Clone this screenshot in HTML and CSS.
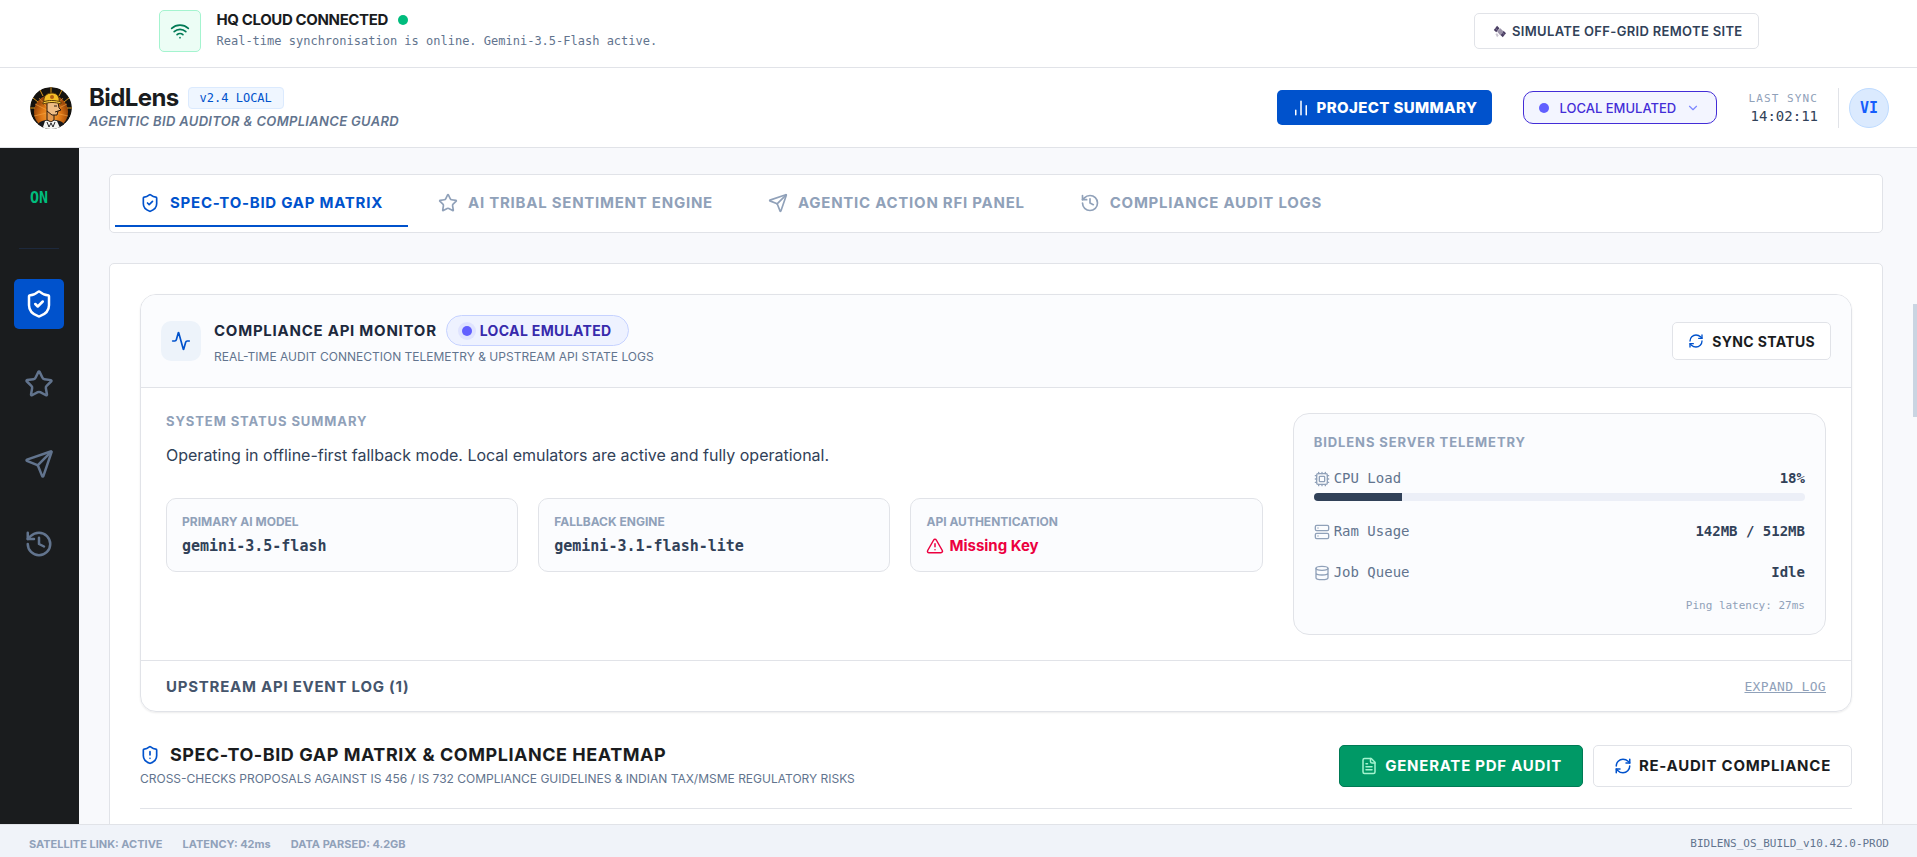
FILE: index.html
```html
<!DOCTYPE html>
<html lang="en">
  <head>
    <meta charset="utf-8">
    <meta name="viewport" content="width=device-width, initial-scale=1">
    <title>BidLens</title>
    <link rel="stylesheet" href="styles.css">
  </head>
  <body>
    <!-- icons shared by the sidebar, tabs and buttons -->
    <svg class="sprite" aria-hidden="true">
      <symbol id="shield-check" viewBox="0 0 24 24">
        <path d="M20 13c0 5-3.5 7.5-7.66 8.95a1 1 0 0 1-.67-.01C7.5 20.5 4 18 4 13V6a1 1 0 0 1 1-1c2 0 4.5-1.2 6.24-2.72a1.17 1.17 0 0 1 1.52 0C14.51 3.81 17 5 19 5a1 1 0 0 1 1 1z"/>
        <path d="m9 12 2 2 4-4"/>
      </symbol>
      <symbol id="shield-alert" viewBox="0 0 24 24">
        <path d="M20 13c0 5-3.5 7.5-7.66 8.95a1 1 0 0 1-.67-.01C7.5 20.5 4 18 4 13V6a1 1 0 0 1 1-1c2 0 4.5-1.2 6.24-2.72a1.17 1.17 0 0 1 1.52 0C14.51 3.81 17 5 19 5a1 1 0 0 1 1 1z"/>
        <path d="M12 8v4M12 16h.01"/>
      </symbol>
      <symbol id="star" viewBox="0 0 24 24">
        <path d="M11.525 2.295a.53.53 0 0 1 .95 0l2.31 4.679a2.123 2.123 0 0 0 1.595 1.16l5.166.756a.53.53 0 0 1 .294.904l-3.736 3.638a2.123 2.123 0 0 0-.611 1.878l.882 5.14a.53.53 0 0 1-.771.56l-4.618-2.428a2.122 2.122 0 0 0-1.973 0L6.396 21.01a.53.53 0 0 1-.77-.56l.881-5.139a2.122 2.122 0 0 0-.611-1.879L2.16 9.795a.53.53 0 0 1 .294-.906l5.165-.755a2.122 2.122 0 0 0 1.597-1.16z"/>
      </symbol>
      <symbol id="send" viewBox="0 0 24 24">
        <path d="M14.536 21.686a.5.5 0 0 0 .937-.024l6.5-19a.496.496 0 0 0-.635-.635l-19 6.5a.5.5 0 0 0-.024.937l7.93 3.18a2 2 0 0 1 1.112 1.11z"/>
        <path d="m21.854 2.147-10.94 10.939"/>
      </symbol>
      <symbol id="history" viewBox="0 0 24 24">
        <path d="M3 12a9 9 0 1 0 9-9 9.75 9.75 0 0 0-6.74 2.74L3 8"/>
        <path d="M3 3v5h5M12 7v5l4 2"/>
      </symbol>
      <symbol id="refresh" viewBox="0 0 24 24">
        <path d="M3 12a9 9 0 0 1 9-9 9.75 9.75 0 0 1 6.74 2.74L21 8"/>
        <path d="M21 3v5h-5"/>
        <path d="M21 12a9 9 0 0 1-9 9 9.75 9.75 0 0 1-6.74-2.74L3 16"/>
        <path d="M8 16H3v5"/>
      </symbol>
    </svg>

    <div class="network-bar">
      <div class="network-inner">
        <div class="network-status">
          <div class="network-icon">
            <svg class="icon icon-20" viewBox="0 0 24 24"><path d="M12 20h.01M2 8.82a15 15 0 0 1 20 0M5 12.859a10 10 0 0 1 14 0M8.5 16.429a5 5 0 0 1 7 0"/></svg>
          </div>
          <div>
            <div class="network-title">HQ CLOUD CONNECTED <span class="dot green"></span></div>
            <div class="network-text">Real-time synchronisation is online. Gemini-3.5-Flash active.</div>
          </div>
        </div>
        <button class="btn btn-small" type="button">
          <svg class="satellite" viewBox="0 0 16 16">
            <path fill="#4b3f63" d="M1 6l4-5 3 3-4 5zM9 12l4-5 3 3-4 5z"/>
            <path fill="#9b93a8" d="M5 8l4-4 4 4-4 5z"/>
            <path fill="#c9c4d0" d="M3 11l2-1 2 3-2 2z"/>
            <path stroke="#8a7fa3" stroke-width="1" d="M3 4l3 3M11 9l3 3"/>
          </svg>
          SIMULATE OFF-GRID REMOTE SITE
        </button>
      </div>
    </div>

    <header class="header">
      <div class="brand">
        <svg class="logo" viewBox="0 0 44 44">
          <defs>
            <radialGradient id="glow" cx="50%" cy="60%" r="50%">
              <stop offset="0" stop-color="#fba63a"/>
              <stop offset="0.6" stop-color="#dd7615"/>
              <stop offset="1" stop-color="#a04c0c"/>
            </radialGradient>
            <clipPath id="round"><circle cx="22" cy="22" r="21"/></clipPath>
          </defs>
          <g clip-path="url(#round)">
            <circle cx="22" cy="22" r="21" fill="#15130f"/>
            <circle cx="22" cy="26" r="17" fill="url(#glow)"/>
            <path d="M22 1v6M11 4l3 6M33 4l-3 6M4 12l5 4M40 12l-5 4M1 22h5M43 22h-5" stroke="#d8961f" stroke-width="1"/>
            <path d="M22 26L6 18M22 26L5 30M22 26L38 18M22 26L39 30M22 26L10 12M22 26L34 12" stroke="#f6a846" stroke-width="1" opacity=".6"/>
            <path d="M7 44c0-6 4-9 10-10h10c6 1 10 4 10 10z" fill="#17181b"/>
            <path d="M13 44l3-9 6-1 6 1 4 9z" fill="#f5f5f2"/>
            <path d="M18 25h7v9l-3 2-4-2z" fill="#e49b51" stroke="#2a1b10" stroke-width="1"/>
            <path d="M18 16h11l1 6 2 2-3 1-1 4h-5l-5-4z" fill="#efbd85" stroke="#2a1b10" stroke-width="1"/>
            <path d="M25 20h3M26 26l3-1" stroke="#2a1b10" stroke-width="1"/>
            <path d="M18 36l2 5 2-4 2 4 2-5" fill="none" stroke="#202124" stroke-width="1"/>
            <path d="M15 16c-1-6 3-9 8-9s8 4 7 9z" fill="#f5bf27" stroke="#5b3b08" stroke-width="1"/>
            <path d="M14 16c5-2 12-2 18 0v2c-6-2-12-2-18 0z" fill="#ffd447" stroke="#5b3b08" stroke-width="1"/>
            <circle cx="23" cy="11" r="2" fill="#b05e12"/>
          </g>
        </svg>
        <div>
          <div class="brand-row">
            <h1>BidLens</h1>
            <span class="version">v2.4 LOCAL</span>
          </div>
          <p class="tagline">AGENTIC BID AUDITOR &amp; COMPLIANCE GUARD</p>
        </div>
      </div>
      <div class="header-actions">
        <button class="btn-summary" type="button">
          <svg class="icon icon-18" viewBox="0 0 24 24"><path d="M5 21v-6M12 21V3M19 21V9"/></svg>
          PROJECT SUMMARY
        </button>
        <label class="mode">
          <span class="dot indigo"></span>
          <select aria-label="Mode">
            <option>LOCAL EMULATED</option>
          </select>
          <svg class="icon icon-14" viewBox="0 0 24 24"><path d="m6 9 6 6 6-6"/></svg>
        </label>
        <div class="sync">
          <div class="sync-label">LAST SYNC</div>
          <div class="sync-time">14:02:11</div>
        </div>
        <div class="user">
          <div class="avatar">VI</div>
        </div>
      </div>
    </header>

    <div class="layout">
      <nav class="sidebar">
        <div class="on">ON</div>
        <button class="side-btn active" type="button" aria-label="Gap matrix"><svg class="icon icon-30"><use href="#shield-check"/></svg></button>
        <button class="side-btn" type="button" aria-label="Sentiment engine"><svg class="icon icon-30"><use href="#star"/></svg></button>
        <button class="side-btn" type="button" aria-label="RFI panel"><svg class="icon icon-30"><use href="#send"/></svg></button>
        <button class="side-btn" type="button" aria-label="Audit logs"><svg class="icon icon-30"><use href="#history"/></svg></button>
      </nav>

      <main class="main">
        <div class="tabs">
          <button class="tab active" type="button"><svg class="icon icon-20"><use href="#shield-check"/></svg>SPEC-TO-BID GAP MATRIX</button>
          <button class="tab" type="button"><svg class="icon icon-20"><use href="#star"/></svg>AI TRIBAL SENTIMENT ENGINE</button>
          <button class="tab" type="button"><svg class="icon icon-20"><use href="#send"/></svg>AGENTIC ACTION RFI PANEL</button>
          <button class="tab" type="button"><svg class="icon icon-20"><use href="#history"/></svg>COMPLIANCE AUDIT LOGS</button>
        </div>

        <div class="panel">
          <section class="monitor">
            <div class="monitor-head">
              <div class="monitor-icon">
                <svg class="icon icon-20" viewBox="0 0 24 24"><path d="M22 12h-2.48a2 2 0 0 0-1.93 1.46l-2.35 8.36a.25.25 0 0 1-.48 0L9.24 2.18a.25.25 0 0 0-.48 0l-2.35 8.36A2 2 0 0 1 4.49 12H2"/></svg>
              </div>
              <div>
                <div class="monitor-title">
                  <h2>COMPLIANCE API MONITOR</h2>
                  <span class="pill"><span class="dot indigo halo"></span>LOCAL EMULATED</span>
                </div>
                <p class="sub">REAL-TIME AUDIT CONNECTION TELEMETRY &amp; UPSTREAM API STATE LOGS</p>
              </div>
              <button class="btn btn-sync" type="button"><svg class="icon icon-16 blue"><use href="#refresh"/></svg>SYNC STATUS</button>
            </div>

            <div class="monitor-body">
              <div class="status">
                <h3>SYSTEM STATUS SUMMARY</h3>
                <p class="status-text">Operating in offline-first fallback mode. Local emulators are active and fully operational.</p>
                <div class="facts">
                  <div class="fact">
                    <div class="fact-label">PRIMARY AI MODEL</div>
                    <div class="fact-value">gemini-3.5-flash</div>
                  </div>
                  <div class="fact">
                    <div class="fact-label">FALLBACK ENGINE</div>
                    <div class="fact-value">gemini-3.1-flash-lite</div>
                  </div>
                  <div class="fact">
                    <div class="fact-label">API AUTHENTICATION</div>
                    <div class="fact-value missing">
                      <svg class="icon icon-18" viewBox="0 0 24 24"><path d="m21.73 18-8-14a2 2 0 0 0-3.48 0l-8 14A2 2 0 0 0 4 21h16a2 2 0 0 0 1.73-3M12 9v4M12 17h.01"/></svg>
                      Missing Key
                    </div>
                  </div>
                </div>
              </div>

              <div class="telemetry">
                <h3>BIDLENS SERVER TELEMETRY</h3>
                <div class="metric">
                  <svg class="icon icon-16" viewBox="0 0 24 24"><rect x="4" y="4" width="16" height="16" rx="2"/><rect x="8" y="8" width="8" height="8" rx="1"/><path d="M12 20v2M12 2v2M17 20v2M17 2v2M2 12h2M2 17h2M2 7h2M20 12h2M20 17h2M20 7h2M7 20v2M7 2v2"/></svg>
                  <span>CPU Load</span><b>18%</b>
                </div>
                <div class="bar"><div class="bar-fill" style="width: 18%"></div></div>
                <div class="metric">
                  <svg class="icon icon-16" viewBox="0 0 24 24"><rect x="2" y="2" width="20" height="8" rx="2"/><rect x="2" y="14" width="20" height="8" rx="2"/><path d="M6 6h.01M6 18h.01"/></svg>
                  <span>Ram Usage</span><b>142MB / 512MB</b>
                </div>
                <div class="metric">
                  <svg class="icon icon-16" viewBox="0 0 24 24"><ellipse cx="12" cy="5" rx="9" ry="3"/><path d="M3 5v14a9 3 0 0 0 18 0V5M3 12a9 3 0 0 0 18 0"/></svg>
                  <span>Job Queue</span><b>Idle</b>
                </div>
                <div class="ping">Ping latency: 27ms</div>
              </div>
            </div>

            <div class="monitor-log">
              <h2>UPSTREAM API EVENT LOG (1)</h2>
              <button class="expand" type="button">EXPAND LOG</button>
            </div>
          </section>

          <section class="matrix-head">
            <div>
              <h2 class="matrix-title"><svg class="icon icon-20 blue"><use href="#shield-alert"/></svg>SPEC-TO-BID GAP MATRIX &amp; COMPLIANCE HEATMAP</h2>
              <p class="sub">CROSS-CHECKS PROPOSALS AGAINST IS 456 / IS 732 COMPLIANCE GUIDELINES &amp; INDIAN TAX/MSME REGULATORY RISKS</p>
            </div>
            <div class="matrix-actions">
              <button class="btn btn-large btn-green" type="button">
                <svg class="icon icon-18" viewBox="0 0 24 24"><path d="M15 2H6a2 2 0 0 0-2 2v16a2 2 0 0 0 2 2h12a2 2 0 0 0 2-2V7Z"/><path d="M14 2v4a2 2 0 0 0 2 2h4M10 9H8M16 13H8M16 17H8"/></svg>
                GENERATE PDF AUDIT
              </button>
              <button class="btn btn-large" type="button"><svg class="icon icon-18 blue"><use href="#refresh"/></svg>RE-AUDIT COMPLIANCE</button>
            </div>
          </section>
        </div>
      </main>
      <div class="scroll-track"><div class="scroll-thumb"></div></div>
    </div>

    <footer class="footer">
      <span>SATELLITE LINK: ACTIVE</span>
      <span>LATENCY: 42ms</span>
      <span>DATA PARSED: 4.2GB</span>
      <span class="build">BIDLENS_OS_BUILD_v10.42.0-PROD</span>
    </footer>
  </body>
</html>
```

FILE: styles.css
```css
* {
  box-sizing: border-box;
}

body {
  margin: 0;
  height: 100vh;
  display: flex;
  flex-direction: column;
  overflow: hidden;
  background: #f8f9fc;
  color: #1a1c1e;
  font-family: Inter, sans-serif;
}

h1, h2, h3, p {
  margin: 0;
}

button, select {
  font-family: inherit;
  cursor: pointer;
}

.sprite {
  display: none;
}

/* icons */
.icon {
  flex: none;
  fill: none;
  stroke: currentColor;
  stroke-width: 2;
  stroke-linecap: round;
  stroke-linejoin: round;
}
.icon-14 { width: 14px; height: 14px; }
.icon-16 { width: 16px; height: 16px; }
.icon-18 { width: 18px; height: 18px; }
.icon-20 { width: 20px; height: 20px; }
.icon-30 { width: 30px; height: 30px; }
.blue { color: #0052cc; }

.dot {
  display: inline-block;
  flex: none;
  width: 10px;
  height: 10px;
  border-radius: 50%;
}
.green { background: #00bc7d; }
.indigo { background: #615fff; }
.halo { box-shadow: 0 0 0 4px #dfe3ff; }

/* buttons */
.btn {
  display: flex;
  align-items: center;
  gap: 8px;
  height: 38px;
  padding: 0 15px;
  background: #fff;
  border: 1px solid #e1e3e8;
  border-radius: 5px;
  color: #1a1c1e;
  font-size: 14px;
  font-weight: 700;
  letter-spacing: 0.025em;
  white-space: nowrap;
}
.btn-small {
  height: 36px;
  padding: 0 15px 0 18px;
  gap: 6px;
  color: #314158;
  font-size: 13px;
  font-weight: 600;
}
.btn-large {
  height: 42px;
  padding: 0 20px;
  gap: 7px;
  font-size: 15px;
  letter-spacing: 0.05em;
}
.btn-green {
  background: #009966;
  border-color: #007a55;
  color: #fff;
}
.btn-green .icon {
  color: #a4f4cf;
}
.satellite {
  width: 13px;
  height: 13px;
}

/* network bar */
.network-bar {
  flex: none;
  padding: 10px 24px 15px;
  background: #fff;
  border-bottom: 1px solid #e1e3e8;
}
.network-inner {
  max-width: 1600px;
  margin: 0 auto;
  display: flex;
  align-items: center;
  justify-content: space-between;
}
.network-status {
  display: flex;
  align-items: center;
  gap: 16px;
}
.network-icon {
  width: 42px;
  height: 42px;
  display: flex;
  align-items: center;
  justify-content: center;
  background: #ecfdf5;
  border: 1px solid #a4f4cf;
  border-radius: 5px;
  color: #007a55;
}
.network-title {
  display: flex;
  align-items: center;
  gap: 10px;
  font-size: 15px;
  line-height: 20px;
  font-weight: 700;
  letter-spacing: -0.025em;
}
.network-text {
  color: #62748e;
  font-family: "DejaVu Sans Mono", monospace;
  font-size: 12px;
  line-height: 22px;
}

/* header */
.header {
  flex: none;
  height: 80px;
  padding: 0 28px 0 29px;
  display: flex;
  align-items: center;
  justify-content: space-between;
  background: #fff;
  border-bottom: 1px solid #e1e3e8;
}
.brand {
  display: flex;
  align-items: center;
  gap: 16px;
}
.logo {
  width: 44px;
  height: 44px;
}
.brand-row {
  display: flex;
  align-items: center;
  gap: 9px;
}
h1 {
  font-size: 24px;
  line-height: 26px;
  font-weight: 700;
  letter-spacing: -0.025em;
}
.version {
  padding: 0 11px;
  background: #eff6ff;
  border: 1px solid #dbeafe;
  border-radius: 4px;
  color: #0052cc;
  font-family: "DejaVu Sans Mono", monospace;
  font-size: 12px;
  line-height: 20px;
}
.tagline {
  color: #62748e;
  font-size: 13px;
  line-height: 20px;
  font-weight: 600;
  font-style: italic;
  letter-spacing: 0.025em;
}
.header-actions {
  display: flex;
  align-items: center;
  gap: 31px;
}
.btn-summary {
  display: flex;
  align-items: center;
  gap: 7px;
  height: 35px;
  padding: 0 15px;
  background: #0052cc;
  border: 0;
  border-radius: 5px;
  color: #fff;
  font-size: 15px;
  font-weight: 800;
  letter-spacing: 0.025em;
}
.mode {
  display: flex;
  align-items: center;
  gap: 10px;
  height: 33px;
  padding: 0 16px 0 15px;
  background: #f3f5ff;
  border: 1px solid #432dd7;
  border-radius: 10px;
  color: #7c86ff;
}
.mode select {
  appearance: none;
  padding: 0;
  background: none;
  border: 0;
  color: #432dd7;
  font-size: 13px;
  font-weight: 500;
}
.sync {
  text-align: right;
  font-family: "DejaVu Sans Mono", monospace;
}
.sync-label {
  color: #90a1b9;
  font-size: 11px;
  line-height: 16px;
  letter-spacing: 0.1em;
}
.sync-time {
  color: #314158;
  font-size: 14px;
  line-height: 18px;
}
.user {
  margin-left: -11px;
  padding-left: 10px;
  border-left: 1px solid #e1e3e8;
}
.avatar {
  width: 40px;
  height: 40px;
  display: flex;
  align-items: center;
  justify-content: center;
  background: #dbeafe;
  border: 1px solid #bedbff;
  border-radius: 50%;
  color: #155dfc;
  font-family: "DejaVu Sans Mono", monospace;
  font-size: 15px;
  font-weight: 700;
}

/* layout */
.layout {
  flex: 1;
  min-height: 0;
  display: flex;
}
.sidebar {
  flex: none;
  width: 79px;
  display: flex;
  flex-direction: column;
  align-items: center;
  gap: 30px;
  padding-top: 30px;
  background: #1a1c1e;
  border-right: 1px solid #1a1c1e;
}
.on {
  width: 40px;
  height: 71px;
  border-bottom: 1px solid #1d293d;
  color: #00bc7d;
  font-family: "DejaVu Sans Mono", monospace;
  font-size: 15px;
  line-height: 40px;
  font-weight: 700;
  text-align: center;
}
.side-btn {
  width: 50px;
  height: 50px;
  padding: 0;
  display: flex;
  align-items: center;
  justify-content: center;
  background: none;
  border: 0;
  border-radius: 5px;
  color: #62748e;
}
.side-btn.active {
  background: #0052cc;
  color: #fff;
}
.main {
  flex: 1;
  min-width: 0;
  padding: 26px 30px 0;
  overflow: hidden;
}
.scroll-track {
  flex: none;
  width: 4px;
  padding-top: 156px;
}
.scroll-thumb {
  height: 113px;
  background: #cad5e2;
}

/* tabs */
.tabs {
  display: flex;
  gap: 5px;
  padding: 5px;
  background: #fff;
  border: 1px solid #e1e3e8;
  border-radius: 5px;
}
.tab {
  display: flex;
  align-items: center;
  gap: 10px;
  height: 47px;
  padding: 0 25px;
  background: none;
  border: 0;
  border-bottom: 2px solid transparent;
  color: #90a1b9;
  font-size: 15px;
  font-weight: 700;
  letter-spacing: 0.05em;
}
.tab.active {
  border-color: #0052cc;
  color: #0052cc;
}

/* panel */
.panel {
  margin-top: 30px;
  min-height: 700px;
  padding: 30px;
  background: #fff;
  border: 1px solid #e1e3e8;
  border-radius: 5px;
}
.monitor {
  border: 1px solid #e1e3e8;
  border-radius: 16px;
  box-shadow: 0 1px 2px rgba(0, 0, 0, 0.08);
  overflow: hidden;
}
.monitor-head {
  display: flex;
  align-items: center;
  gap: 13px;
  padding: 20px;
  background: #fbfcfe;
  border-bottom: 1px solid #e1e3e8;
}
.monitor-icon {
  width: 40px;
  height: 40px;
  display: flex;
  align-items: center;
  justify-content: center;
  background: #edf3fa;
  border-radius: 10px;
  color: #0052cc;
}
.monitor-title {
  display: flex;
  align-items: center;
  gap: 9px;
}
h2 {
  color: #1d293d;
  font-size: 15px;
  font-weight: 700;
  letter-spacing: 0.05em;
}
.pill {
  display: flex;
  align-items: center;
  gap: 8px;
  padding: 0 16px 0 15px;
  background: #eef2ff;
  border: 1px solid #c6d2ff;
  border-radius: 16px;
  color: #372aac;
  font-size: 14px;
  line-height: 29px;
  font-weight: 700;
  letter-spacing: 0.025em;
}
.sub {
  color: #62748e;
  font-size: 12px;
  line-height: 21px;
}
.btn-sync {
  margin-left: auto;
}
.monitor-body {
  display: grid;
  grid-template-columns: repeat(3, 1fr);
  gap: 30px;
  padding: 25px;
}
.status {
  grid-column: span 2;
}
h3 {
  color: #90a1b9;
  font-size: 13px;
  line-height: 16px;
  font-weight: 700;
  letter-spacing: 0.07em;
}
.status-text {
  margin-top: 12px;
  color: #314158;
  font-size: 16px;
  line-height: 28px;
}
.facts {
  display: grid;
  grid-template-columns: repeat(3, 1fr);
  gap: 20px;
  margin-top: 29px;
}
.fact {
  padding: 14px 15px;
  background: #fbfcfe;
  border: 1px solid #e1e3e8;
  border-radius: 10px;
}
.fact-label {
  color: #90a1b9;
  font-size: 12px;
  line-height: 18px;
  font-weight: 700;
}
.fact-value {
  margin-top: 4px;
  color: #314158;
  font-family: "DejaVu Sans Mono", monospace;
  font-size: 15px;
  line-height: 22px;
  font-weight: 700;
}
.missing {
  display: flex;
  align-items: center;
  gap: 5px;
  color: #ec003f;
  font-family: inherit;
}
.telemetry {
  padding: 20px 20px 19px;
  background: #fbfcfe;
  border: 1px solid #e1e3e8;
  border-radius: 16px;
}
.telemetry h3 {
  margin-bottom: 18px;
}
.metric {
  display: flex;
  align-items: center;
  gap: 4px;
  color: #62748e;
  font-family: "DejaVu Sans Mono", monospace;
  font-size: 14px;
  line-height: 21px;
}
.metric .icon {
  color: #90a1b9;
}
.metric b {
  margin-left: auto;
  color: #314158;
}
.metric + .metric {
  margin-top: 20px;
}
.bar {
  height: 8px;
  margin: 4px 0 20px;
  background: #eceff7;
  border-radius: 4px;
  overflow: hidden;
}
.bar-fill {
  height: 8px;
  background: #314158;
}
.ping {
  margin-top: 14px;
  color: #90a1b9;
  font-family: "DejaVu Sans Mono", monospace;
  font-size: 11px;
  line-height: 18px;
  text-align: right;
}
.monitor-log {
  display: flex;
  align-items: center;
  justify-content: space-between;
  height: 51px;
  padding: 0 25px;
  border-top: 1px solid #e1e3e8;
}
.monitor-log h2 {
  color: #45556c;
}
.expand {
  padding: 0;
  background: none;
  border: 0;
  color: #90a1b9;
  font-family: "DejaVu Sans Mono", monospace;
  font-size: 13px;
  letter-spacing: 0.025em;
  text-decoration: underline;
}

/* gap matrix */
.matrix-head {
  display: flex;
  align-items: center;
  justify-content: space-between;
  margin-top: 30px;
  padding-bottom: 19px;
  border-bottom: 1px solid #e1e3e8;
}
.matrix-title {
  display: flex;
  align-items: center;
  gap: 10px;
  color: #1a1c1e;
  font-size: 18px;
  line-height: 26px;
  letter-spacing: 0.03em;
}
.matrix-actions {
  display: flex;
  gap: 10px;
}

/* footer */
.footer {
  flex: none;
  height: 33px;
  padding: 6px 28px 0 29px;
  display: flex;
  gap: 20px;
  background: #f0f3f9;
  border-top: 1px solid #e1e3e8;
  color: #90a1b9;
  font-size: 11px;
  line-height: 26px;
  font-weight: 700;
}
.build {
  margin-left: auto;
  color: #62748e;
  font-family: "DejaVu Sans Mono", monospace;
  font-weight: 400;
}
```
